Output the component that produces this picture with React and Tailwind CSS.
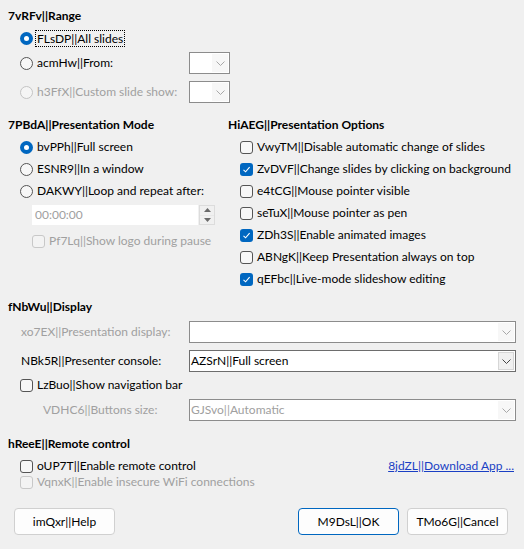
import React from 'react';

const Radio = ({ checked, disabled }) => {
  if (checked) {
    return (
      <span className="w-[13px] h-[13px] rounded-full bg-[#0067c0] flex items-center justify-center shrink-0">
        <span className="w-[5px] h-[5px] rounded-full bg-white" />
      </span>
    );
  }
  return (
    <span
      className={`w-[13px] h-[13px] rounded-full border shrink-0 ${
        disabled ? 'border-[#c4c4c4] bg-[#f5f5f5]' : 'border-[#555] bg-[#f7f7f7]'
      }`}
    />
  );
};

const Check = ({ checked, disabled }) => {
  if (checked) {
    return (
      <span className="w-[13px] h-[13px] rounded-[3px] bg-[#0067c0] flex items-center justify-center shrink-0">
        <svg width="9" height="9" viewBox="0 0 9 9" fill="none">
          <path d="M1.5 4.8 L3.6 6.8 L7.6 2.2" stroke="white" strokeWidth="1.1" />
        </svg>
      </span>
    );
  }
  return (
    <span
      className={`w-[13px] h-[13px] rounded-[3px] border shrink-0 ${
        disabled ? 'border-[#c8c8c8] bg-[#f3f3f3]' : 'border-[#555] bg-[#f7f7f7]'
      }`}
    />
  );
};

const Chevron = ({ color = '#8a8a8a' }) => (
  <svg width="9" height="5" viewBox="0 0 9 5" fill="none">
    <path d="M0.5 0.5 L4.5 4.5 L8.5 0.5" stroke={color} strokeWidth="1" />
  </svg>
);

const Combo = ({ className = '', text = '', disabled, dark }) => (
  <div
    className={`h-[22px] flex border bg-white ${
      dark ? 'border-[#6d6d6d]' : 'border-[#8c8c8c]'
    } ${className}`}
  >
    <div className={`flex-1 flex items-center pl-[1px] whitespace-nowrap ${disabled ? 'text-[#a0a0a0]' : 'text-black'}`}>
      {text}
    </div>
    <div className={`w-[16px] my-[1px] mr-[1px] flex items-center justify-center ${dark ? 'bg-[#f0f0f0] border border-[#d6d6d6]' : 'bg-[#f7f7f7]'}`}>
      <Chevron color={dark ? '#444' : '#a8a8a8'} />
    </div>
  </div>
);

const RadioRow = ({ label, checked, disabled, focus, className = '' }) => (
  <div className={`h-[22px] flex items-center gap-[4px] whitespace-nowrap ${className}`}>
    <Radio checked={checked} disabled={disabled} />
    <span
      className={`${disabled ? 'text-[#a0a0a0]' : 'text-black'} ${
        focus ? 'outline outline-1 outline-dotted outline-black px-[1px] -ml-[1px] leading-[15px]' : ''
      }`}
    >
      {label}
    </span>
  </div>
);

const CheckRow = ({ label, checked, disabled, className = '' }) => (
  <div className={`flex items-center gap-[4px] whitespace-nowrap ${className}`}>
    <Check checked={checked} disabled={disabled} />
    <span className={disabled ? 'text-[#a0a0a0]' : 'text-black'}>{label}</span>
  </div>
);

const Heading = ({ children, className = '' }) => (
  <div className={`h-[18px] flex items-center font-bold whitespace-nowrap ${className}`}>{children}</div>
);

const options = [
  ['VwyTM||Disable automatic change of slides', false],
  ['ZvDVF||Change slides by clicking on background', true],
  ['e4tCG||Mouse pointer visible', false],
  ['seTuX||Mouse pointer as pen', false],
  ['ZDh3S||Enable animated images', true],
  ['ABNgK||Keep Presentation always on top', false],
  ['qEFbc||Live-mode slideshow editing', true],
];

export default function App() {
  return (
    <div
      className="w-[524px] h-[549px] bg-[#f0f0f0] text-[12px] text-black pt-[7px] overflow-hidden"
      style={{ fontFamily: 'Lato, "Segoe UI", sans-serif' }}
    >
      {/* Range */}
      <div className="pl-[8px]">
        <Heading>7vRFv||Range</Heading>
        <div className="pl-[12px] mt-[2px]">
          <RadioRow label="FLsDP||All slides" checked focus />
          <div className="flex items-center mt-[3px]">
            <RadioRow label="acmHw||From:" className="w-[169px]" />
            <Combo className="w-[41px]" />
          </div>
          <div className="flex items-center mt-[7px]">
            <RadioRow label="h3FfX||Custom slide show:" disabled className="w-[169px]" />
            <Combo className="w-[41px]" />
          </div>
        </div>
      </div>

      {/* Mode + Options */}
      <div className="flex mt-[13px] pl-[8px]">
        <div className="w-[220px]">
          <Heading>7PBdA||Presentation Mode</Heading>
          <div className="pl-[12px] mt-[2px]">
            <RadioRow label="bvPPh||Full screen" checked />
            <RadioRow label="ESNR9||In a window" />
            <RadioRow label="DAKWY||Loop and repeat after:" />
            <div className="flex ml-[12px] mt-[3px] h-[20px]">
              <div className="w-[166px] bg-white flex items-center pl-[3px] text-[#a0a0a0]">00:00:00</div>
              <div className="w-[16px] ml-[1px] flex flex-col gap-[1px] bg-[#e8e8e8] border border-[#dcdcdc]">
                <div className="flex-1 flex items-center justify-center bg-[#f0f0f0]">
                  <svg width="7" height="4" viewBox="0 0 7 4"><path d="M0 4 L3.5 0 L7 4 Z" fill="#6a6a6a" /></svg>
                </div>
                <div className="flex-1 flex items-center justify-center bg-[#f0f0f0]">
                  <svg width="7" height="4" viewBox="0 0 7 4"><path d="M0 0 L3.5 4 L7 0 Z" fill="#6a6a6a" /></svg>
                </div>
              </div>
            </div>
            <CheckRow
              label="Pf7Lq||Show logo during pause"
              disabled
              className="h-[22px] ml-[12px] mt-[5px]"
            />
          </div>
        </div>
        <div>
          <Heading>HiAEG||Presentation Options</Heading>
          <div className="pl-[12px] mt-[2px]">
            {options.map(([label, checked]) => (
              <CheckRow key={label} label={label} checked={checked} className="h-[22px]" />
            ))}
          </div>
        </div>
      </div>

      {/* Display */}
      <div className="pl-[8px] pr-[8px] mt-[8px]">
        <Heading>fNbWu||Display</Heading>
        <div className="flex items-center mt-[5px]">
          <span className="w-[181px] pl-[13px] text-[#a0a0a0] whitespace-nowrap">xo7EX||Presentation display:</span>
          <Combo className="flex-1" disabled />
        </div>
        <div className="flex items-center mt-[7px]">
          <span className="w-[181px] pl-[13px] whitespace-nowrap">NBk5R||Presenter console:</span>
          <Combo className="flex-1" text="AZSrN||Full screen" dark />
        </div>
        <CheckRow label="LzBuo||Show navigation bar" className="h-[22px] mt-[2px] pl-[12px]" />
        <div className="flex items-center mt-[3px]">
          <span className="w-[181px] pl-[35px] text-[#a0a0a0] whitespace-nowrap">VDHC6||Buttons size:</span>
          <Combo className="flex-1" text="GJSvo||Automatic" disabled />
        </div>
      </div>

      {/* Remote */}
      <div className="pl-[8px] pr-[10px] mt-[14px]">
        <Heading>hReeE||Remote control</Heading>
        <div className="pl-[12px] mt-[5px]">
          <div className="flex items-center justify-between h-[16px]">
            <CheckRow label="oUP7T||Enable remote control" />
            <a href="#" className="text-[#1a3fc4] underline whitespace-nowrap">8jdZL||Download App ...</a>
          </div>
          <CheckRow label="VqnxK||Enable insecure WiFi connections" disabled className="h-[16px]" />
        </div>
      </div>

      {/* Buttons */}
      <div className="flex items-center mt-[18px] pl-[14px] pr-[16px]">
        <button className="w-[101px] h-[27px] rounded-[4px] border border-[#d0d0d0] bg-[#fdfdfd]">
          imQxr||Help
        </button>
        <div className="flex-1" />
        <button className="w-[101px] h-[27px] rounded-[4px] border border-[#0067c0] bg-[#fdfdfd]">
          M9DsL||OK
        </button>
        <button className="w-[101px] h-[27px] ml-[8px] rounded-[4px] border border-[#d0d0d0] bg-[#fdfdfd]">
          TMo6G||Cancel
        </button>
      </div>
    </div>
  );
}
